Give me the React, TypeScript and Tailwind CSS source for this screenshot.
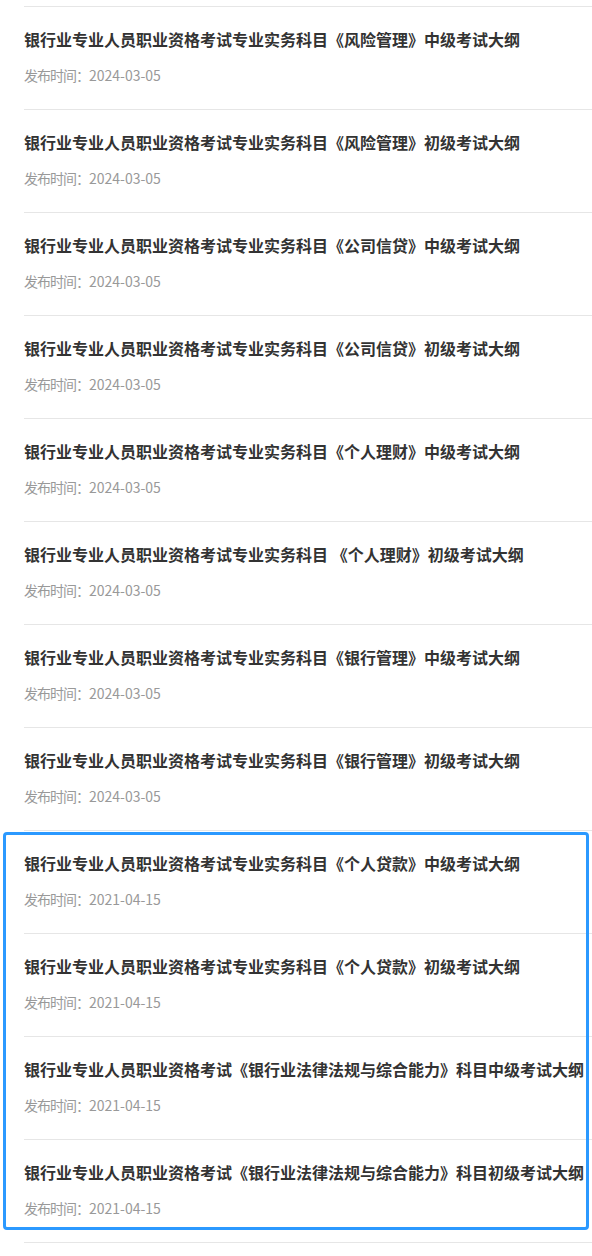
const items = [
  { title: '银行业专业人员职业资格考试专业实务科目《风险管理》中级考试大纲', date: '2024-03-05' },
  { title: '银行业专业人员职业资格考试专业实务科目《风险管理》初级考试大纲', date: '2024-03-05' },
  { title: '银行业专业人员职业资格考试专业实务科目《公司信贷》中级考试大纲', date: '2024-03-05' },
  { title: '银行业专业人员职业资格考试专业实务科目《公司信贷》初级考试大纲', date: '2024-03-05' },
  { title: '银行业专业人员职业资格考试专业实务科目《个人理财》中级考试大纲', date: '2024-03-05' },
  { title: '银行业专业人员职业资格考试专业实务科目 《个人理财》初级考试大纲', date: '2024-03-05' },
  { title: '银行业专业人员职业资格考试专业实务科目《银行管理》中级考试大纲', date: '2024-03-05' },
  { title: '银行业专业人员职业资格考试专业实务科目《银行管理》初级考试大纲', date: '2024-03-05' },
  { title: '银行业专业人员职业资格考试专业实务科目《个人贷款》中级考试大纲', date: '2021-04-15' },
  { title: '银行业专业人员职业资格考试专业实务科目《个人贷款》初级考试大纲', date: '2021-04-15' },
  { title: '银行业专业人员职业资格考试《银行业法律法规与综合能力》科目中级考试大纲', date: '2021-04-15' },
  { title: '银行业专业人员职业资格考试《银行业法律法规与综合能力》科目初级考试大纲', date: '2021-04-15' },
]

export default function App() {
  return (
    <div
      className="relative min-h-[1256px] w-[592px] overflow-hidden bg-white pt-[6px]"
      style={{ fontFamily: '"Noto Sans CJK SC", "Liberation Sans", sans-serif' }}
    >
      <ul className="ml-6 border-b border-[#e6e6e6]">
        {items.map((item, i) => (
          <li key={i} className="border-t border-[#e6e6e6] pt-[20px] pb-[24px]">
            <h3 className="whitespace-nowrap text-[16px] leading-[24px] font-bold text-[#333]">
              {item.title}
            </h3>
            <p className="mt-[14px] text-[14px] leading-[20px] text-[#999]">
              <span className="tracking-[-1px]">发布时间：</span>
              {item.date}
            </p>
          </li>
        ))}
      </ul>

      {/* highlight frame over the 2021 items */}
      <div className="pointer-events-none absolute top-[832px] left-[3px] h-[398px] w-[586px] rounded-[4px] border-[3px] border-[#2b99ff]" />
    </div>
  )
}
